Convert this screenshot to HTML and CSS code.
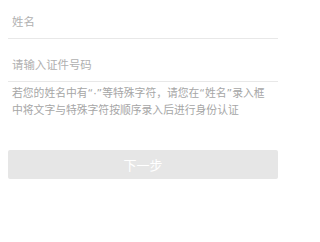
FILE: index.html
```html
<!DOCTYPE html>
<html lang="zh-CN">
<head>
<meta charset="utf-8">
<link rel="stylesheet" href="styles.css">
</head>
<body>
<div class="page">
  <div class="field field-first"><span class="placeholder">姓名</span></div>
  <div class="field"><span class="placeholder">请输入证件号码</span></div>
  <p class="hint">若您的姓名中有“·”等特殊字符，请您在“姓名”录入框中将文字与特殊字符按顺序录入后进行身份认证</p>
  <button class="next" type="button">下一步</button>
</div>
</body>
</html>
```
FILE: styles.css
```css
html, body {
  margin: 0;
  padding: 0;
  background: #ffffff;
}
.page {
  box-sizing: border-box;
  max-width: 286px;
  padding: 0 8px;
  font-family: "DejaVu Sans", "Noto Sans CJK SC", sans-serif;
}
.field {
  box-sizing: border-box;
  height: 43px;
  display: flex;
  align-items: center;
  padding: 9px 0 0 4px;
  border-bottom: 1px solid #e8e8e8;
}
.field-first {
  height: 39px;
  padding-top: 6px;
}
.placeholder {
  font-size: 11.4px;
  line-height: 16px;
  color: #b0b0b0;
}
.hint {
  margin: 4px 0 0;
  padding: 0 9px 0 4px;
  font-size: 10.8px;
  line-height: 16.5px;
  color: #a6a6a6;
}
.next {
  display: block;
  box-sizing: border-box;
  width: 100%;
  height: 29px;
  margin-top: 31px;
  padding: 0;
  border: 0;
  border-radius: 2px;
  background: #e6e6e6;
  color: #ffffff;
  font-family: "DejaVu Sans", "Noto Sans CJK SC", sans-serif;
  font-size: 13px;
}
```
